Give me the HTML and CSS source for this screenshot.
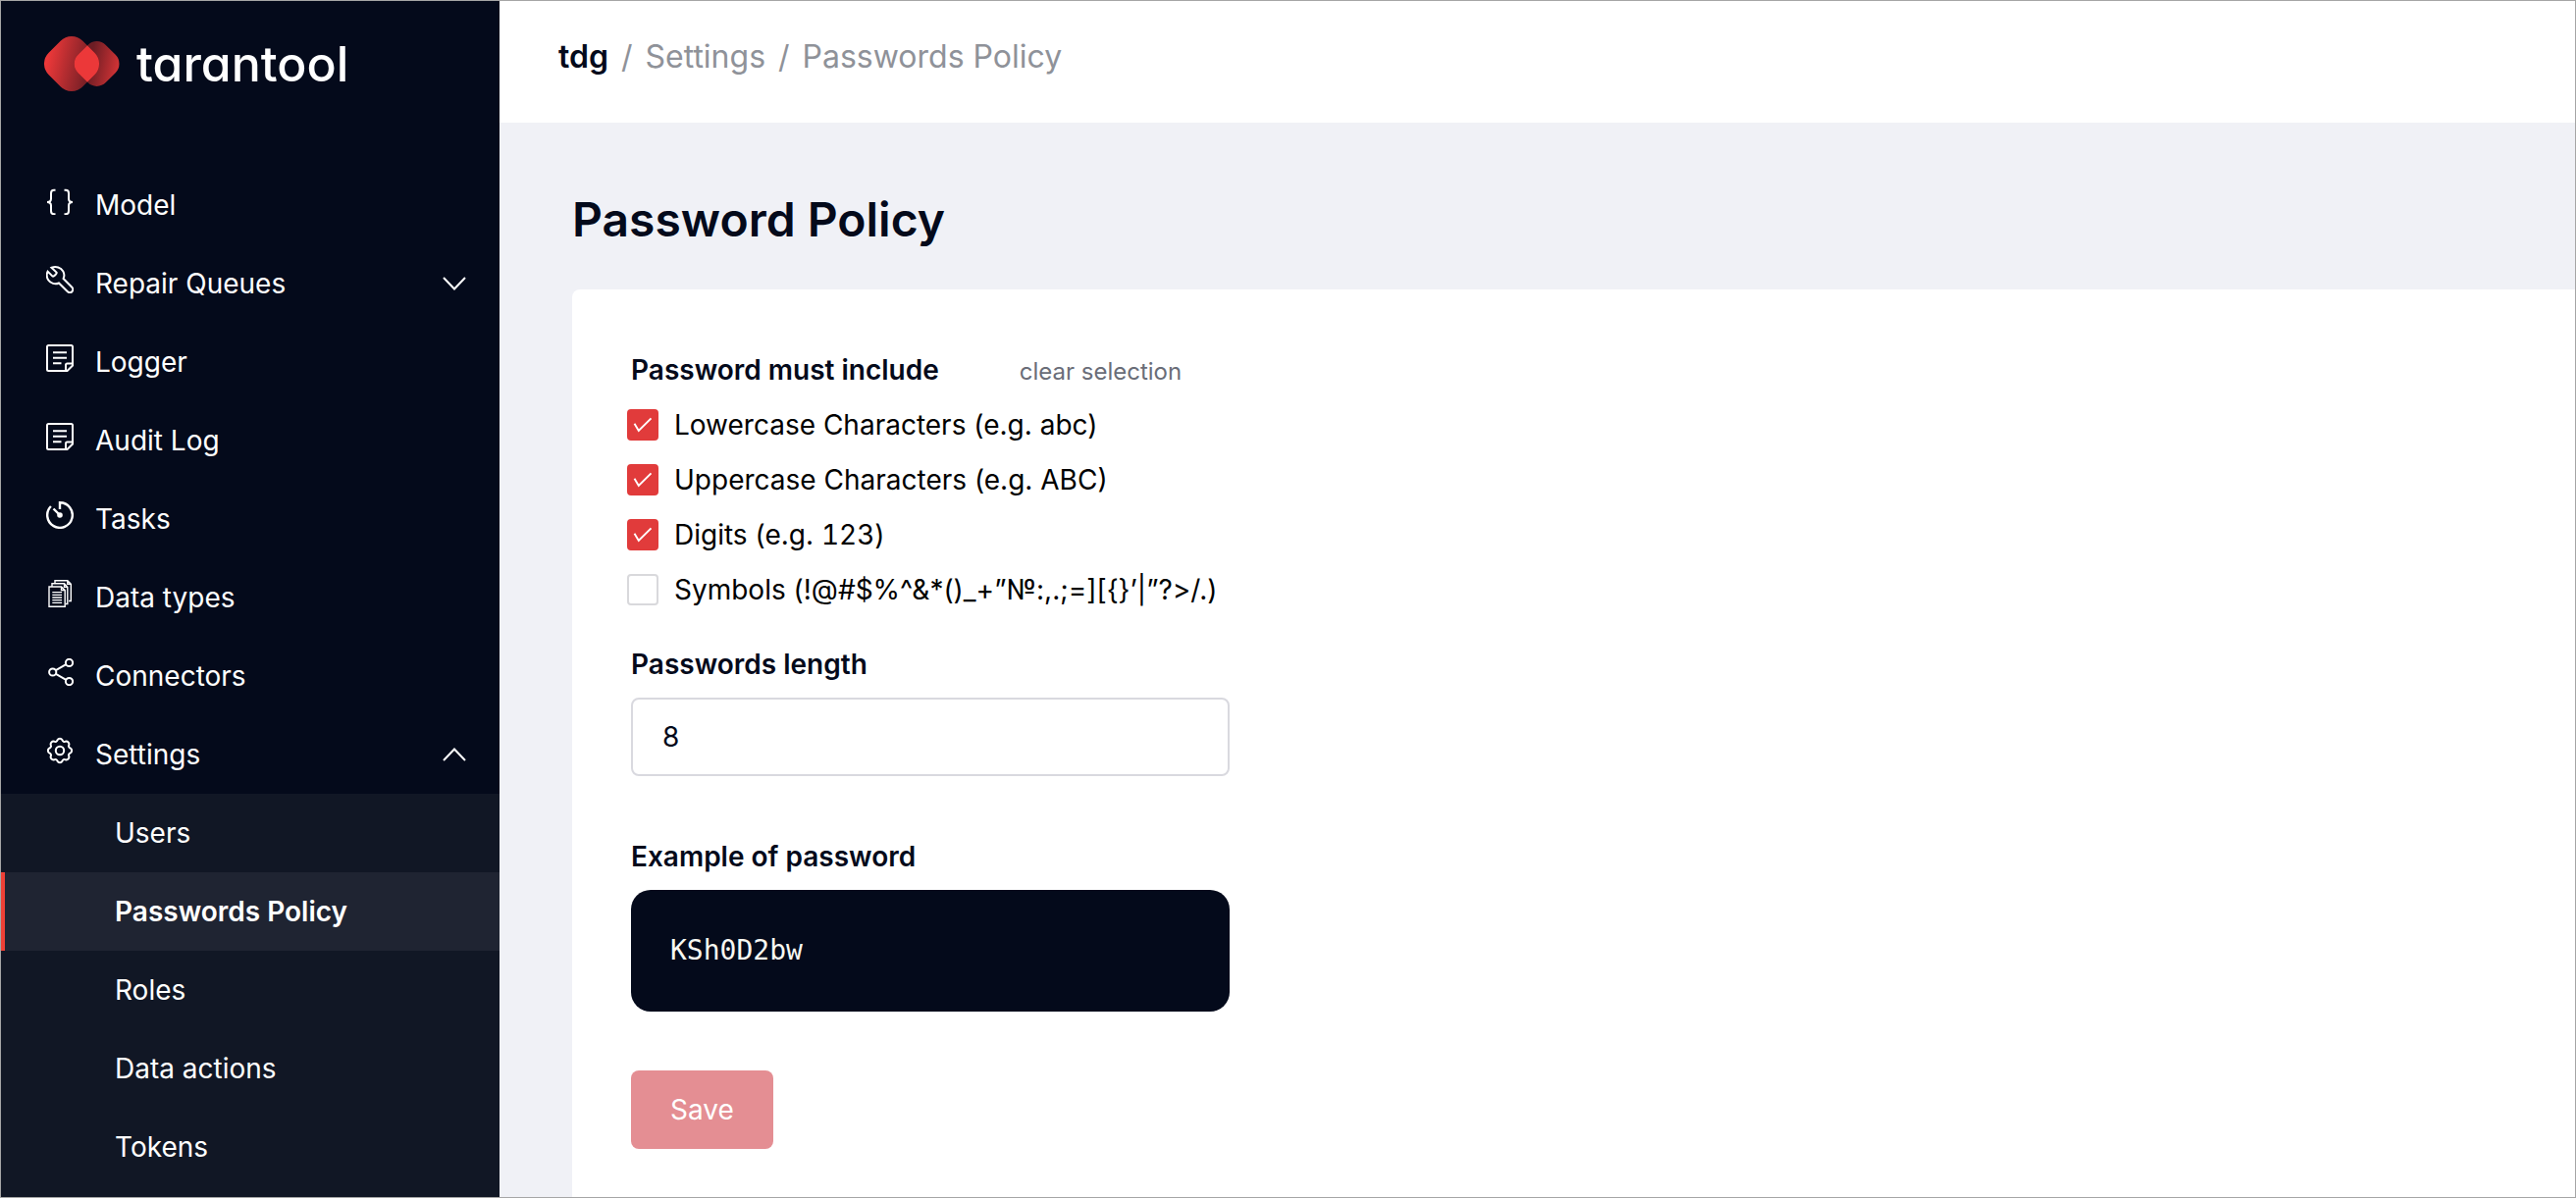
FILE: index.html
```html
<!DOCTYPE html>
<html lang="en">
<head>
  <meta charset="utf-8">
  <meta name="viewport" content="width=device-width, initial-scale=1">
  <title>Passwords Policy</title>
  <link rel="stylesheet" href="styles.css">
</head>
<body>
  <div class="app">
    <aside class="sidebar">
      <a class="logo" href="#">
        <svg class="logo-mark" viewBox="1 0 78 58" aria-hidden="true">
          <defs>
            <linearGradient id="leftFill" gradientUnits="userSpaceOnUse" x1="4" y1="25" x2="50" y2="35" gradientTransform="rotate(-45 29 29)">
              <stop offset="0" stop-color="#ec3839"/>
              <stop offset="1" stop-color="#6d1d24"/>
            </linearGradient>
            <linearGradient id="rightFill" gradientUnits="userSpaceOnUse" x1="48" y1="27" x2="78" y2="33" gradientTransform="rotate(-45 54.6 29)">
              <stop offset="0" stop-color="#6d1d24"/>
              <stop offset="1" stop-color="#d63436"/>
            </linearGradient>
            <clipPath id="leftClip">
              <rect x="4.5" y="4.5" width="49" height="49" rx="16" transform="rotate(45 29 29)"/>
            </clipPath>
          </defs>
          <rect x="4.5" y="4.5" width="49" height="49" rx="16" transform="rotate(45 29 29)" fill="url(#leftFill)"/>
          <rect x="34.6" y="9" width="40" height="40" rx="13" transform="rotate(45 54.6 29)" fill="url(#rightFill)"/>
          <g clip-path="url(#leftClip)">
            <rect x="34.6" y="9" width="40" height="40" rx="13" transform="rotate(45 54.6 29)" fill="#ec3839"/>
          </g>
        </svg>
        <span class="logo-name">tarantool</span>
      </a>
      <nav class="menu">
        <a class="menu-item" href="#">
          <svg class="icon" viewBox="0 0 28 28" aria-hidden="true"><path d="M9.500 2.800H8Q5 2.800 5 6v5.500Q5 15 1 15q4 0 4 3.500V24Q5 27.200 8 27.200H9.500M18.500 2.800H20Q23 2.800 23 6v5.500Q23 15 27 15q-4 0-4 3.500V24Q23 27.200 20 27.200H18.500" stroke-width="2"/></svg>
          <span>Model</span>
        </a>
        <a class="menu-item" href="#">
          <svg class="icon" viewBox="0 0 28 28" aria-hidden="true"><path d="M5.500 1.800C10 0 15 1.500 17.300 5.500C18.700 8 18.700 10.500 17.600 13L26.300 21.800A3.100 3.100 0 0 1 21.900 26.300L13 17.500C9 19.300 4.500 17.800 2.300 14.500C.3 11.500.2 8.500 1.600 5.600L6.600 10.600C7.600 11.500 11.500 7.600 10.600 6.600Z"/></svg>
          <span>Repair Queues</span>
          <svg class="chevron" viewBox="0 0 24 14" aria-hidden="true"><path d="M1 1l11 11.500L23 1"/></svg>
        </a>
        <a class="menu-item" href="#">
          <svg class="icon" viewBox="0 0 28 28" aria-hidden="true"><path d="M21.500 27H2.500Q1 27 1 25.500V2.500Q1 1 2.500 1h23Q27 1 27 2.500v19z" stroke-width="2"/><path d="M7 8.200H21M7 13.700H21M7 19.200H15.500M20 27V21Q20 19.500 21.500 19.500H27"/></svg>
          <span>Logger</span>
        </a>
        <a class="menu-item" href="#">
          <svg class="icon" viewBox="0 0 28 28" aria-hidden="true"><path d="M21.500 27H2.500Q1 27 1 25.500V2.500Q1 1 2.500 1h23Q27 1 27 2.500v19z" stroke-width="2"/><path d="M7 8.200H21M7 13.700H21M7 19.200H15.500M20 27V21Q20 19.500 21.500 19.500H27"/></svg>
          <span>Audit Log</span>
        </a>
        <a class="menu-item" href="#">
          <svg class="icon" viewBox="0 0 28 28" aria-hidden="true"><path d="M14 8V1.200A12.800 12.800 0 1 1 4.900 5" stroke-width="2.400"/><path d="M7.500 7.500L14 14" stroke-width="2.400"/><circle cx="14" cy="14" r="1.800" fill="currentColor"/></svg>
          <span>Tasks</span>
        </a>
        <a class="menu-item" href="#">
          <svg class="icon" viewBox="0 0 28 28" aria-hidden="true"><path d="M3 7H15.500L19.200 10.500V27.300H3ZM15.500 7v3.500h3.700M6 6.500V3.800H18.500L21.800 7.200V24.500H20M9 3.500V.8H21.800L25.300 4.200V21.500H23M18.500 3.800V7.200h3.300M21.800.8V4.200h3.500" stroke-width="1.400"/><path d="M6.300 12.600h9.800M6.300 15.300h9.800M6.300 18h9.800M6.300 20.700h9.800M6.300 23.400h9.800" stroke-width="1.300"/></svg>
          <span>Data types</span>
        </a>
        <a class="menu-item" href="#">
          <svg class="icon" viewBox="0 0 28 28" aria-hidden="true"><circle cx="6.700" cy="14" r="3.600"/><circle cx="23.500" cy="4.400" r="3.600"/><circle cx="23.500" cy="23.600" r="3.600"/><path d="M9.900 12.200L20.300 6.200M9.900 15.800L20.300 21.800"/></svg>
          <span>Connectors</span>
        </a>
        <a class="menu-item" href="#">
          <svg class="icon" viewBox="-14 -14 28 28" aria-hidden="true"><path d="M-2.500 -10.700A2.900 2.900 0 0 1 2.500 -10.700A2.200 2.200 0 0 0 5.800 -9.300A2.900 2.900 0 0 1 9.300 -5.800A2.200 2.200 0 0 0 10.700 -2.500A2.900 2.900 0 0 1 10.700 2.500A2.200 2.200 0 0 0 9.300 5.800A2.900 2.900 0 0 1 5.800 9.300A2.200 2.200 0 0 0 2.500 10.700A2.900 2.900 0 0 1 -2.500 10.700A2.200 2.200 0 0 0 -5.800 9.300A2.900 2.900 0 0 1 -9.300 5.800A2.200 2.200 0 0 0 -10.700 2.500A2.900 2.900 0 0 1 -10.700 -2.500A2.200 2.200 0 0 0 -9.300 -5.800A2.900 2.900 0 0 1 -5.800 -9.300A2.200 2.200 0 0 0 -2.500 -10.700Z"/><circle cx="0" cy="0" r="4.200"/></svg>
          <span>Settings</span>
          <svg class="chevron" viewBox="0 0 24 14" aria-hidden="true"><path d="M1 13L12 1.500 23 13"/></svg>
        </a>
      </nav>
      <nav class="submenu" aria-label="Settings">
        <a class="submenu-item" href="#">Users</a>
        <a class="submenu-item submenu-item-active" href="#" aria-current="page">Passwords Policy</a>
        <a class="submenu-item" href="#">Roles</a>
        <a class="submenu-item" href="#">Data actions</a>
        <a class="submenu-item" href="#">Tokens</a>
      </nav>
    </aside>

    <div class="page">
      <header class="breadcrumbs">
        <a class="crumb-root" href="#">tdg</a>
        <span>/</span>
        <a href="#">Settings</a>
        <span>/</span>
        <a href="#">Passwords Policy</a>
      </header>
      <main class="content">
        <h1 class="title">Password Policy</h1>
        <form class="card">
          <div class="rules" role="group" aria-labelledby="rules-label">
            <div class="rules-head">
              <span class="label" id="rules-label">Password must include</span>
              <button class="clear" type="button">clear selection</button>
            </div>
            <label class="check"><input type="checkbox" checked><span>Lowercase Characters (e.g. abc)</span></label>
            <label class="check"><input type="checkbox" checked><span>Uppercase Characters (e.g. ABC)</span></label>
            <label class="check"><input type="checkbox" checked><span>Digits (e.g. <span class="digits">123</span>)</span></label>
            <label class="check"><input type="checkbox"><span class="symbols">Symbols (!@#$%^&amp;*()_+”№:,.;=][{}’|”?&gt;/.)</span></label>
          </div>
          <div class="field">
            <label class="label" for="length">Passwords length</label>
            <input class="length" id="length" type="text" inputmode="numeric" value="8">
          </div>
          <div class="field">
            <span class="label">Example of password</span>
            <code class="example">KSh0D2bw</code>
          </div>
          <button class="save" type="submit" disabled>Save</button>
        </form>
      </main>
    </div>
  </div>
</body>
</html>
```
FILE: styles.css
```css
* {
  box-sizing: border-box;
}

body {
  margin: 0;
  color: #000;
  font: 400 28px/44px Inter, "Liberation Sans", sans-serif;
  font-optical-sizing: none;
}

a {
  color: inherit;
  text-decoration: none;
}

button,
input {
  font: inherit;
}

.app {
  display: flex;
  min-height: 100vh;
  border: 1px solid #a6a6a6;
}

/* Sidebar */

.sidebar {
  display: flex;
  flex-direction: column;
  flex: 0 0 508px;
  background: #040a1b;
  color: #fff;
}

.logo {
  display: flex;
  align-items: center;
  gap: 16px;
  height: 168px;
  padding: 0 44px 40px;
}

.logo-mark {
  width: 78px;
  height: 58px;
}

.logo-name {
  font-size: 50px;
  font-weight: 500;
  font-feature-settings: "cv11";
}

.menu-item {
  display: flex;
  align-items: baseline;
  padding: 18px 34px 18px 46px;
}

.icon,
.chevron {
  fill: none;
  stroke: currentColor;
  stroke-width: 2;
}

.icon {
  width: 28px;
  height: 28px;
  margin-right: 22px;
}

.chevron {
  align-self: center;
  width: 24px;
  height: 14px;
  margin-left: auto;
}

.submenu {
  flex: 1;
  background: #111725;
}

.submenu-item {
  display: block;
  padding: 18px 34px 18px 116px;
}

.submenu-item-active {
  padding-left: 112px;
  border-left: 4px solid #ee4036;
  background: #1f2432;
  font-weight: 600;
}

/* Page */

.page {
  display: flex;
  flex: 1;
  flex-direction: column;
  min-width: 0;
}

.breadcrumbs {
  display: flex;
  gap: 13px;
  padding: 33px 60px 43px;
  color: #8f9299;
  font-size: 32px;
  line-height: 48px;
}

.crumb-root {
  color: #040a1b;
  font-weight: 600;
}

.content {
  display: flex;
  flex: 1;
  flex-direction: column;
  padding: 69px 0 0 74px;
  background: #f0f1f6;
}

.title {
  margin: 0 0 41px;
  color: #040a1b;
  font-size: 48px;
  font-weight: 600;
  line-height: 60px;
}

.card {
  display: flex;
  flex: 1;
  flex-direction: column;
  align-items: flex-start;
  padding: 60px 60px 48px;
  border-radius: 8px 0 0 0;
  background: #fff;
}

.label {
  color: #040a1b;
  font-weight: 600;
}

.rules,
.field {
  display: flex;
  flex-direction: column;
  gap: 12px;
}

.rules {
  margin-bottom: 32px;
}

.rules-head {
  display: flex;
  align-items: baseline;
  gap: 82px;
}

.clear {
  padding: 0;
  border: 0;
  background: none;
  color: #6a6d78;
  font-size: 24px;
  line-height: 36px;
}

.check {
  display: flex;
  align-items: center;
  gap: 16px;
  margin-left: -4px;
}

.check input {
  appearance: none;
  width: 32px;
  height: 32px;
  margin: 0;
  border: 2px solid #d9d9dc;
  border-radius: 4px;
  background: #fff;
}

.check input:checked {
  border-color: #e13b3b;
  background: #e13b3b url("data:image/svg+xml,%3Csvg xmlns='http://www.w3.org/2000/svg' viewBox='0 0 28 28'%3E%3Cpath d='M5.500 12.700l4.300 7.300L22.500 7.300' fill='none' stroke='white' stroke-width='1.900'/%3E%3C/svg%3E") center / 28px no-repeat;
}

.digits {
  font-variant-numeric: tabular-nums;
}

.symbols {
  font-feature-settings: "calt" 0;
}

.field {
  width: 610px;
  max-width: 100%;
  margin-bottom: 60px;
}

.length {
  width: 100%;
  height: 80px;
  padding: 0 30px;
  border: 2px solid #d9d9df;
  border-radius: 8px;
  color: #040a1b;
}

.example {
  padding: 40px;
  border-radius: 20px;
  background: #040a1b;
  color: #f8f8f2;
  font-family: "DejaVu Sans Mono", "Liberation Mono", monospace;
}

.save {
  height: 80px;
  padding: 0 40px;
  border: 0;
  border-radius: 8px;
  background: #e48e93;
  color: #fff;
}
```
